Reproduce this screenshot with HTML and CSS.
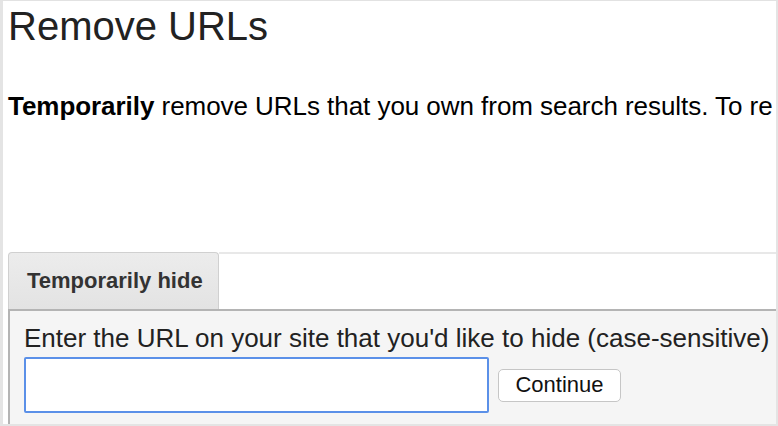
FILE: index.html
```html
<!DOCTYPE html>
<html lang="en">
<head>
<meta charset="utf-8">
<title>Remove URLs</title>
<link rel="stylesheet" href="styles.css">
</head>
<body>
<div class="frame">
  <h1 class="title">Remove URLs</h1>
  <p class="intro"><b>Temporarily</b> remove URLs that you own from search results. To re</p>
  <div class="tabs">
    <div class="tab">Temporarily hide</div>
  </div>
  <div class="panel">
    <label class="label" for="url">Enter the URL on your site that you'd like to hide (case-sensitive)</label>
    <div class="row">
      <input class="url" id="url" type="text">
      <button class="btn" type="button">Continue</button>
    </div>
  </div>
</div>
</body>
</html>
```

FILE: styles.css
```css
html, body {
  margin: 0;
  padding: 0;
  background: #fff;
}

.frame {
  box-sizing: border-box;
  width: 778px;
  height: 426px;
  overflow: hidden;
  border-top: 1px solid #e2e2e2;
  border-left: 3px solid #e4e4e4;
  border-right: 2px solid #e4e4e4;
  border-bottom: 2px solid #e4e4e4;
  padding-left: 5px;
  display: flex;
  flex-direction: column;
  font-family: "Liberation Sans", Arial, sans-serif;
}

.title {
  margin: 5px 0 0;
  font-size: 40px;
  line-height: 40px;
  font-weight: normal;
  color: #222;
}

.intro {
  margin: 47px 0 0;
  font-size: 26px;
  line-height: 26px;
  color: #000;
  white-space: nowrap;
  letter-spacing: -0.05px;
}

.intro b {
  font-weight: bold;
}

.tabs {
  margin-top: 133px;
  display: flex;
}

.tabs::after {
  content: "";
  flex: 1;
  border-top: 2px solid #e8e8e8;
}

.tab {
  box-sizing: border-box;
  width: 211px;
  height: 57px;
  padding-left: 18px;
  display: flex;
  align-items: center;
  background: linear-gradient(#ececec, #e3e3e3);
  border: 1px solid #d0d0d0;
  border-bottom: none;
  border-radius: 4px 4px 0 0;
  font-size: 22px;
  font-weight: bold;
  color: #333;
}

.panel {
  flex: 1;
  background: #f5f5f5;
  border-top: 2px solid #b4b4b4;
  border-left: 2px solid #b4b4b4;
  padding: 12px 0 0 14px;
}

.label {
  display: block;
  font-size: 26px;
  line-height: 30px;
  color: #222;
  white-space: nowrap;
}

.row {
  margin-top: 4px;
  display: flex;
  align-items: center;
}

.url {
  box-sizing: border-box;
  width: 465px;
  height: 56px;
  margin: 0;
  border: 2px solid #5b90e8;
  border-radius: 2px;
  background: #fff;
  outline: none;
}

.btn {
  box-sizing: border-box;
  width: 123px;
  height: 33px;
  margin: 0 0 0 9px;
  padding: 0;
  background: #fff;
  border: 1px solid #c6c6c6;
  border-radius: 5px;
  font-family: "Liberation Sans", Arial, sans-serif;
  font-size: 22px;
  color: #111;
}
```
